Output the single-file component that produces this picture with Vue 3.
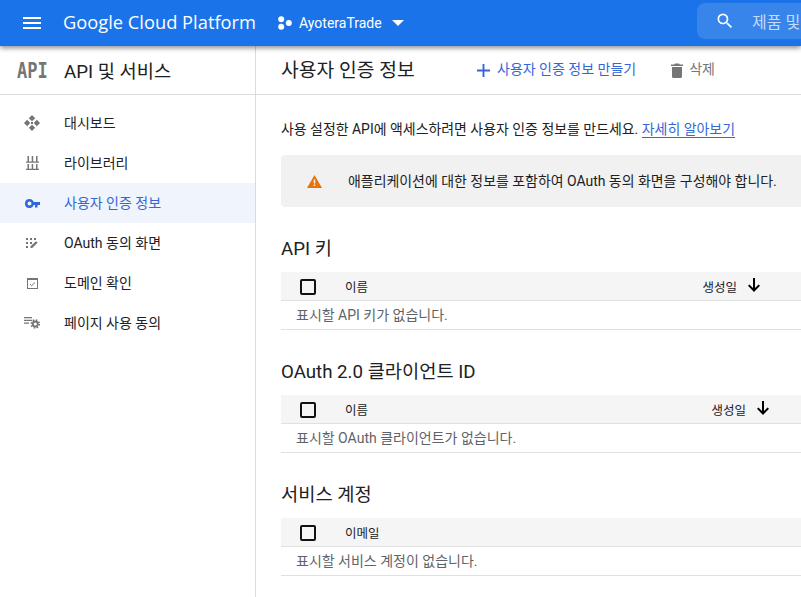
<script setup>
const nav = [
  { label: '대시보드', icon: 'dash' },
  { label: '라이브러리', icon: 'lib' },
  { label: '사용자 인증 정보', icon: 'key', active: true },
  { label: 'OAuth 동의 화면', icon: 'oauth' },
  { label: '도메인 확인', icon: 'domain' },
  { label: '페이지 사용 동의', icon: 'page' }
]
const sections = [
  { title: 'API 키', col: '이름', date: '생성일', dateClass: 'd1', empty: '표시할 API 키가 없습니다.' },
  { title: 'OAuth 2.0 클라이언트 ID', col: '이름', date: '생성일', dateClass: 'd2', empty: '표시할 OAuth 클라이언트가 없습니다.' },
  { title: '서비스 계정', col: '이메일', date: '', dateClass: '', empty: '표시할 서비스 계정이 없습니다.' }
]
</script>

<template>
  <div class="page">
    <header class="top">
      <svg class="menu" width="24" height="24" viewBox="0 0 24 24"><path fill="#fff" d="M3 18h18v-2H3v2zm0-5h18v-2H3v2zm0-7v2h18V6H3z"/></svg>
      <span class="brand">Google Cloud Platform</span>
      <span class="project">
        <svg width="14" height="14" viewBox="0 0 14 14"><circle cx="3.2" cy="3.2" r="3" fill="#fff"/><circle cx="3.2" cy="10.800" r="3" fill="#fff"/><circle cx="10.800" cy="7" r="3" fill="#fff"/></svg>
        <span class="pname">AyoteraTrade</span>
        <svg class="caret" width="12" height="6" viewBox="0 0 12 6"><path fill="#fff" d="M0 0h12L6 6z"/></svg>
      </span>
      <div class="search">
        <svg width="20" height="20" viewBox="0 0 24 24"><path fill="#fff" d="M15.500 14h-.79l-.28-.27A6.470 6.470 0 0 0 16 9.500 6.500 6.500 0 1 0 9.500 16c1.610 0 3.090-.59 4.230-1.570l.27.28v.79l5 4.990L20.490 19l-4.990-5zm-6 0C7.010 14 5 11.990 5 9.500S7.010 5 9.500 5 14 7.010 14 9.500 11.990 14 9.500 14z"/></svg>
        <span class="stext">제품 및 리소스 검색</span>
      </div>
    </header>

    <div class="body">
      <aside class="side">
        <div class="side-head">
          <span class="api-logo"><span class="api-glyphs">API</span></span>
          <span class="side-title">API 및 서비스</span>
        </div>
        <nav class="nav">
          <a v-for="n in nav" :key="n.label" class="item" :class="{ active: n.active }">
            <span class="ic">
              <svg v-if="n.icon === 'dash'" width="16" height="16" viewBox="0 0 16 16" fill="#757575">
                <path d="M8 0l3.200 3.200L8 6.200 4.800 3.200zM8 9.800l3.200 3L8 16l-3.200-3.200zM0 8l3.200-3.200L6.200 8l-3 3.200zM9.800 8l3-3.200L16 8l-3.200 3.200z"/><rect x="7" y="7" width="2" height="2"/>
              </svg>
              <svg v-else-if="n.icon === 'lib'" width="13" height="14" viewBox="0 0 13 14" fill="#757575">
                <path d="M1.500 0h1.500v5.500H1.500zM5.700 0h1.500v5.500H5.700zM10 0h1.500v5.500H10zM0 5.500h13v1.200H0zM1.500 8h1.500v5H1.500zM5.700 8h1.500v5H5.700zM10 8h1.500v5H10zM0 12.800h13V14H0z"/>
              </svg>
              <svg v-else-if="n.icon === 'key'" width="15" height="9" viewBox="0 0 15 9">
                <path fill="#3367d6" d="M4.500 0a4.500 4.500 0 1 0 4.200 6H10v2.500h2.500V6H15V3H8.700A4.500 4.500 0 0 0 4.500 0zm0 2.500a2 2 0 1 1 0 4 2 2 0 0 1 0-4z"/>
              </svg>
              <svg v-else-if="n.icon === 'oauth'" width="12" height="10" viewBox="0 0 12 10" fill="#757575">
                <path d="M0 0h2v2H0zM4 0h2v2H4zM8 0h2v2H8zM0 4h2v2H0zM4 4h2v2H4zM0 8h2v2H0zM4.500 8.300L10 3.200l1.600 1.500L6.200 10H4.500z"/>
              </svg>
              <svg v-else-if="n.icon === 'domain'" width="11" height="11" viewBox="0 0 11 11" fill="none">
                <rect x=".5" y=".5" width="10" height="10" stroke="#757575"/>
                <rect x="1" y="1" width="9" height="1" fill="#757575"/>
                <path d="M3 6l1.700 1.700L8 4.400" stroke="#757575" stroke-width="1"/>
              </svg>
              <svg v-else width="16" height="12" viewBox="0 0 16 12" fill="#757575">
                <path d="M0 0h8v1.200H0zM0 2.800h8V4H0zM0 5.600h5v1.200H0z"/>
                <circle cx="11.300" cy="7" r="2.500" fill="none" stroke="#757575" stroke-width="1.800"/>
                <circle cx="11.300" cy="7" r="4" fill="none" stroke="#757575" stroke-width="1.600" stroke-dasharray="1.600 1.540"/>
              </svg>
            </span>
            <span class="lbl">{{ n.label }}</span>
          </a>
        </nav>
      </aside>

      <main class="main">
        <div class="main-head">
          <h1 class="h1">사용자 인증 정보</h1>
          <span class="act create">
            <svg width="13" height="13" viewBox="0 0 14 14"><path fill="#3367d6" d="M6 0h2v6h6v2H8v6H6V8H0V6h6z"/></svg>
            <span>사용자 인증 정보 만들기</span>
          </span>
          <span class="act del">
            <svg width="12" height="15" viewBox="0 0 12 15"><path fill="#757575" d="M1 13.500c0 .8.700 1.500 1.500 1.500h7c.8 0 1.500-.7 1.500-1.500V4H1zM12 1.500H8.700L8 .5H4l-.7 1H0V3h12z"/></svg>
            <span>삭제</span>
          </span>
        </div>

        <div class="content">
          <p class="intro">사용 설정한 API에 액세스하려면 사용자 인증 정보를 만드세요. <a class="link">자세히 알아보기</a></p>
          <div class="warn">
            <svg width="15" height="13" viewBox="0 0 15 13"><path fill="#e8710a" fill-rule="evenodd" d="M7.500 0L15 13H0zM6.700 4.500v4h1.600v-4zm0 5v1.600h1.600V9.500z"/></svg>
            <span class="warn-text">애플리케이션에 대한 정보를 포함하여 OAuth 동의 화면을 구성해야 합니다.</span>
          </div>

          <section v-for="s in sections" :key="s.title" class="sec">
            <h2 class="h2">{{ s.title }}</h2>
            <div class="thead">
              <span class="cb"></span>
              <span class="col">{{ s.col }}</span>
              <span v-if="s.date" class="date" :class="s.dateClass">
                <span>{{ s.date }}</span>
                <svg width="12" height="14" viewBox="0 0 12 14"><path fill="#000" d="M5 0h2v10l3.600-3.600L12 7.800 6 14 0 7.800l1.400-1.400L5 10z"/></svg>
              </span>
            </div>
            <div class="empty">{{ s.empty }}</div>
          </section>
        </div>
      </main>
    </div>
  </div>
</template>

<style>
html, body { margin: 0; overflow: hidden; background: #fff; }
</style>

<style scoped>
.page {
  width: 801px;
  height: 597px;
  overflow: hidden;
  position: relative;
  font-family: Roboto, "Noto Sans CJK KR", sans-serif;
  color: #202124;
}
.top {
  height: 46px;
  background: #1a73e8;
  display: flex;
  align-items: center;
  box-shadow: 0 2px 5px rgba(0, 0, 0, .45);
  position: relative;
  z-index: 2;
  color: #fff;
}
.menu { margin-left: 20px; flex: none; }
.brand {
  margin-left: 19px;
  width: 193px;
  padding-bottom: 3px;
  font-family: "Open Sans", sans-serif;
  font-size: 18.300px;
  white-space: nowrap;
  flex: none;
}
.project { margin-left: 22px; display: flex; align-items: center; flex: none; font-size: 14px; }
.pname { margin-left: 7px; }
.caret { margin-left: 10px; }
.search {
  margin-left: auto;
  width: 104px;
  height: 36px;
  flex: none;
  margin-bottom: 5px;
  background: rgba(255, 255, 255, .13);
  border-radius: 8px 0 0 8px;
  display: flex;
  align-items: center;
  padding-left: 18px;
  box-sizing: border-box;
  overflow: hidden;
  white-space: nowrap;
}
.search svg { flex: none; }
.stext { margin-left: 17px; font-size: 16px; color: #c6dafc; }
.body { display: flex; height: 551px; }
.side { width: 256px; flex: none; border-right: 1px solid #dadce0; box-sizing: border-box; }
.side-head {
  height: 49px;
  border-bottom: 1px solid #dadce0;
  box-sizing: border-box;
  display: flex;
  align-items: center;
}
.api-logo {
  width: 64px;
  padding-left: 17px;
  box-sizing: border-box;
  flex: none;
}
.api-glyphs {
  display: inline-block;
  font-family: "DejaVu Sans Mono", monospace;
  font-weight: 700;
  font-size: 17px;
  color: #757575;
  transform: scaleY(1.28);
}
.side-title { font-size: 18.700px; color: #202124; padding-bottom: 2px; }
.nav { padding-top: 8px; }
.item { height: 40px; display: flex; align-items: center; font-size: 14px; color: #202124; }
.item.active { background: #eff4fd; color: #3367d6; }
.lbl { padding-bottom: 3px; }
.ic { width: 64px; flex: none; display: flex; justify-content: center; }
.main { flex: 1; min-width: 0; }
.main-head {
  height: 49px;
  border-bottom: 1px solid #dadce0;
  box-sizing: border-box;
  display: flex;
  align-items: center;
  padding-left: 25px;
  white-space: nowrap;
}
.h1 { margin: 0 0 3px; font-size: 19.300px; font-weight: 400; width: 196px; flex: none; }
.act { display: flex; align-items: center; font-size: 14px; flex: none; }
.act span { padding-bottom: 4px; }
.create { color: #3367d6; }
.create svg { margin-right: 7px; }
.del { color: #757575; margin-left: 35px; }
.del svg { margin-right: 6px; }
.content { padding-left: 25px; width: 620px; }
.intro { margin: 0; padding-top: 25px; height: 19px; line-height: 19px; font-size: 13.950px; color: #202124; white-space: nowrap; }
.link { color: #3367d6; border-bottom: 1px solid #3367d6; }
.warn {
  margin-top: 16px;
  height: 52px;
  background: #f1f1f1;
  border-radius: 4px;
  display: flex;
  align-items: center;
  padding-left: 26px;
  font-size: 13.950px;
  white-space: nowrap;
}
.warn-text { margin-left: 26px; padding-bottom: 2px; }
.h2 { margin: 0; padding-top: 30px; height: 24px; line-height: 24px; font-size: 18.700px; font-weight: 400; white-space: nowrap; padding-bottom: 11px; }
.thead {
  height: 29px;
  box-sizing: border-box;
  background: #f5f5f5;
  border-bottom: 1px solid #e0e0e0;
  display: flex;
  align-items: center;
  position: relative;
  font-size: 12.500px;
}
.cb {
  width: 12px;
  height: 12px;
  border: 2px solid #111;
  border-radius: 2px;
  margin-left: 19px;
  margin-top: 2px;
  flex: none;
}
.col { margin-left: 29px; }
.date { display: flex; align-items: center; margin-left: auto; }
.date svg { margin-left: 11px; margin-top: -2px; }
.d1 { margin-right: 141px; }
.d2 { margin-right: 132px; }
.empty {
  height: 29px;
  box-sizing: border-box;
  line-height: 28px;
  border-bottom: 1px solid #e0e0e0;
  padding-left: 15px;
  font-size: 14px;
  color: #5f6368;
}
</style>
